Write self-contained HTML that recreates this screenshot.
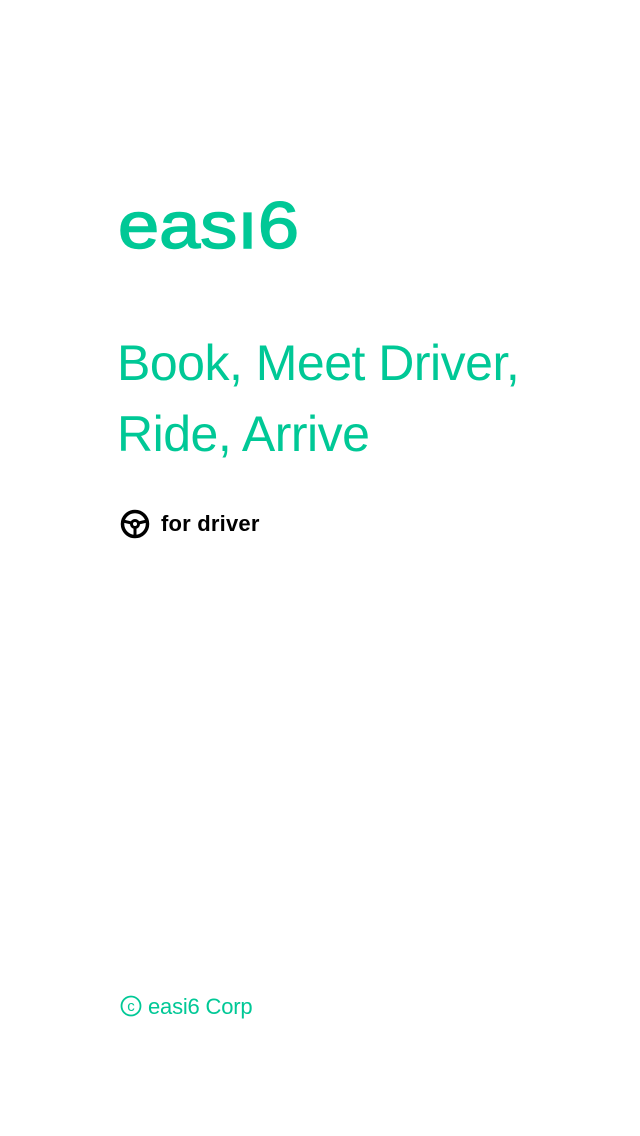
<!DOCTYPE html>
<html><head><meta charset="utf-8"><style>
html,body{margin:0;padding:0;background:#fff;width:640px;height:1136px;overflow:hidden;font-family:"Liberation Sans",sans-serif}
.tag{position:absolute;left:117px;top:328px;font-size:50px;line-height:71px;letter-spacing:-0.5px;color:#00c896;white-space:nowrap}
.fd{position:absolute;left:161px;top:511px;font-size:22px;font-weight:bold;color:#000;letter-spacing:0.2px}
.ft{position:absolute;left:148px;top:994px;font-size:22px;color:#00c896;letter-spacing:-0.2px}
</style></head><body>
<svg style="position:absolute;left:0;top:0" width="640" height="300">
<text x="118" y="248" font-family="Liberation Sans" font-size="66" fill="#00c896" stroke="#00c896" stroke-width="1.5" textLength="181" lengthAdjust="spacingAndGlyphs">eası6</text>
</svg>
<div class="tag">Book, Meet Driver,<br>Ride, Arrive</div>
<svg style="position:absolute;left:119px;top:508px" width="32" height="32" viewBox="0 0 32 32">
<circle cx="16" cy="16" r="12.5" fill="none" stroke="#000" stroke-width="3.5"/>
<circle cx="16" cy="16" r="3.5" fill="none" stroke="#000" stroke-width="3"/>
<path d="M4 13 L12.5 15 M28 13 L19.5 15 M16 19.5 L16 28" stroke="#000" stroke-width="3"/>
</svg>
<div class="fd">for driver</div>
<svg style="position:absolute;left:120px;top:995px" width="22" height="22" viewBox="0 0 22 22">
<circle cx="11" cy="11" r="9.5" fill="none" stroke="#00c896" stroke-width="1.8"/>
<text x="11" y="16" text-anchor="middle" font-family="Liberation Sans" font-size="15" fill="#00c896">c</text>
</svg>
<div class="ft">easi6 Corp</div>
</body></html>
